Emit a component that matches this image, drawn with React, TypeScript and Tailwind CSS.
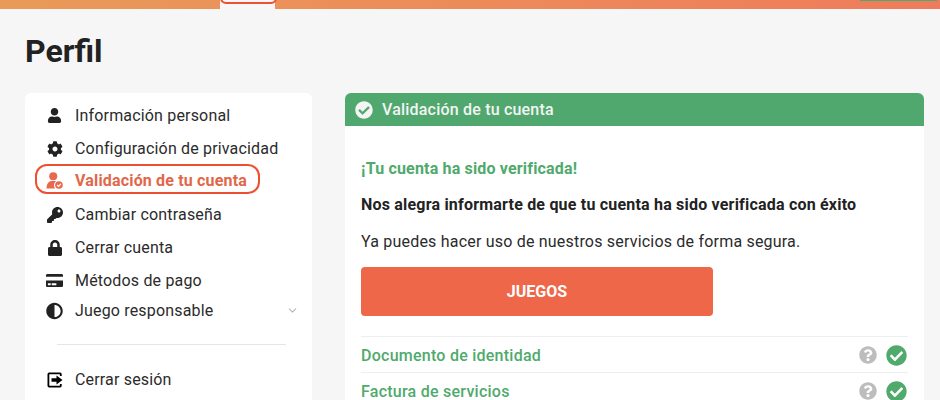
import type { ReactNode } from "react";
import {
  FaAdjust,
  FaCheckCircle,
  FaCog,
  FaCreditCard,
  FaKey,
  FaLock,
  FaQuestionCircle,
  FaUser,
} from "react-icons/fa";
import { ChevronDown } from "lucide-react";

function UserCheckIcon() {
  return (
    <svg viewBox="0 0 16 16" className="h-[17px] w-[17px]" fill="currentColor">
      <circle cx="6.8" cy="4" r="3.8" />
      <path d="M0.5 15.5 C0.5 11 2.5 8.5 6 8.5 H8 C8.6 8.5 9 8.6 9.4 8.8 A4.6 4.6 0 0 0 8.6 15.5 Z" />
      <circle cx="12.2" cy="12.2" r="3.6" />
      <path d="M10.5 12.2 L11.8 13.5 L14 11.2" fill="none" stroke="#fff" strokeWidth="1.2" />
    </svg>
  );
}

function LogoutIcon() {
  return (
    <svg viewBox="0 0 16 16" className="h-[16px] w-[16px]" fill="currentColor">
      <path d="M2.2 0.5 H13 A1.7 1.7 0 0 1 14.7 2.2 V4 H12.9 V2.3 H2.3 V13.7 H12.9 V12 H14.7 V13.8 A1.7 1.7 0 0 1 13 15.5 H2.2 A1.7 1.7 0 0 1 0.5 13.8 V2.2 A1.7 1.7 0 0 1 2.2 0.5 Z" />
      <path d="M4.5 6.2 H9.5 V3.4 L15.5 8 L9.5 12.6 V9.8 H4.5 Z" />
    </svg>
  );
}

function MenuRow({
  icon,
  label,
  className,
  children,
}: {
  icon: ReactNode;
  label: string;
  className: string;
  children?: ReactNode;
}) {
  return (
    <div className={`flex items-center ${className}`}>
      <span className="flex w-[17px] shrink-0 justify-center">{icon}</span>
      <span className="ml-[12px] text-[16px] leading-[24px] tracking-[0.17px] text-[#2b2b2b]">{label}</span>
      {children}
    </div>
  );
}

function DocRow({ label }: { label: string }) {
  return (
    <div className="flex h-[36px] items-center justify-between border-t border-[#eeeeee] pr-[1px] pt-[1px]">
      <span className="pt-[1px] text-[16px] font-medium tracking-[0.25px] text-[#4faa6c]">{label}</span>
      <span className="flex items-center gap-[9px]">
        <FaQuestionCircle className="text-[18px] text-[#bdbdbd]" />
        <FaCheckCircle className="text-[21px] text-[#4faa6c]" />
      </span>
    </div>
  );
}

export default function App() {
  return (
    <div className="h-[400px] w-[940px] overflow-hidden bg-[#f6f6f6] font-['Roboto',sans-serif]">
      {/* barra superior */}
      <div className="relative h-[9px] bg-gradient-to-r from-[#e99a58] to-[#ef7b5c]">
        <div className="absolute left-[220px] top-0 h-[9px] w-[55px] bg-[#f6f6f6]" />
        <div className="absolute left-[220px] top-[-8px] h-[12px] w-[57px] rounded-[8px] border-2 border-[#ee4f2e]" />
        <div className="absolute left-[860px] top-0 h-px w-[77px] bg-[#4faa6c]" />
      </div>

      <div className="pl-[25px] pr-[16px]">
        <h1 className="mt-[18px] text-[32px] font-bold leading-[48px] text-[#222222]">Perfil</h1>

        <div className="mt-[18px] flex items-start gap-[33px]">
          {/* menú lateral */}
          <div className="h-[320px] w-[287px] shrink-0 rounded-t-[6px] bg-white pl-[21px] pt-[6px]">
            <MenuRow className="h-[33px]" icon={<FaUser className="text-[15px] text-[#222222]" />} label="Información personal" />
            <MenuRow className="h-[33px]" icon={<FaCog className="text-[16px] text-[#222222]" />} label="Configuración de privacidad" />
            <div className="-ml-[11px] -mt-[1px] mb-[4px] flex h-[30px] w-[225px] items-center rounded-[12px] border-2 border-[#ee4f2e] pl-[9px]">
              <span className="flex w-[17px] shrink-0 justify-center pt-[2px] text-[#e8694c]">
                <UserCheckIcon />
              </span>
              <span className="ml-[12px] pt-[3px] text-[16px] font-bold tracking-[0.17px] text-[#e2674a]">Validación de tu cuenta</span>
            </div>
            <MenuRow className="h-[33px]" icon={<FaKey className="text-[16px] text-[#222222]" />} label="Cambiar contraseña" />
            <MenuRow className="h-[33px]" icon={<FaLock className="text-[16px] text-[#222222]" />} label="Cerrar cuenta" />
            <MenuRow className="h-[33px]" icon={<FaCreditCard className="text-[17px] text-[#222222]" />} label="Métodos de pago" />
            <MenuRow className="-mt-[1px] h-[30px]" icon={<FaAdjust className="text-[18px] text-[#222222]" />} label="Juego responsable">
              <ChevronDown className="mb-[2px] ml-auto mr-[13px] h-[13px] w-[13px] text-[#b5b5b5]" />
            </MenuRow>
            <div className="mb-[18px] ml-[11px] mt-[18px] h-px w-[229px] bg-[#e6e6e6]" />
            <MenuRow className="h-[33px]" icon={<LogoutIcon />} label="Cerrar sesión" />
          </div>

          {/* tarjeta de validación */}
          <div className="w-[579px] shrink-0">
            <div className="flex h-[33px] items-center rounded-t-[6px] bg-[#51a86e] pl-[10px]">
              <FaCheckCircle className="text-[18px] text-[#f4f4f4]" />
              <span className="ml-[9px] text-[16px] font-medium tracking-[0.2px] text-[#f4f4f4]">Validación de tu cuenta</span>
            </div>
            <div className="h-[280px] bg-white px-[16px] pt-[33px]">
              <p className="text-[16px] font-bold leading-[20px] tracking-[0.17px] text-[#4faa6c]">¡Tu cuenta ha sido verificada!</p>
              <p className="mt-[16px] text-[16px] font-bold leading-[20px] tracking-[0.2px] text-[#222222]">
                Nos alegra informarte de que tu cuenta ha sido verificada con éxito
              </p>
              <p className="mt-[17px] text-[16px] leading-[20px] tracking-[0.2px] text-[#2b2b2b]">
                Ya puedes hacer uso de nuestros servicios de forma segura.
              </p>
              <div className="mt-[15px] flex h-[49px] w-[352px] items-center justify-center rounded-[4px] bg-[#ef6749] pt-[1px] text-[16px] font-bold text-white">
                JUEGOS
              </div>
              <div className="mt-[20px]">
                <DocRow label="Documento de identidad" />
                <DocRow label="Factura de servicios" />
              </div>
            </div>
          </div>
        </div>
      </div>
    </div>
  );
}
